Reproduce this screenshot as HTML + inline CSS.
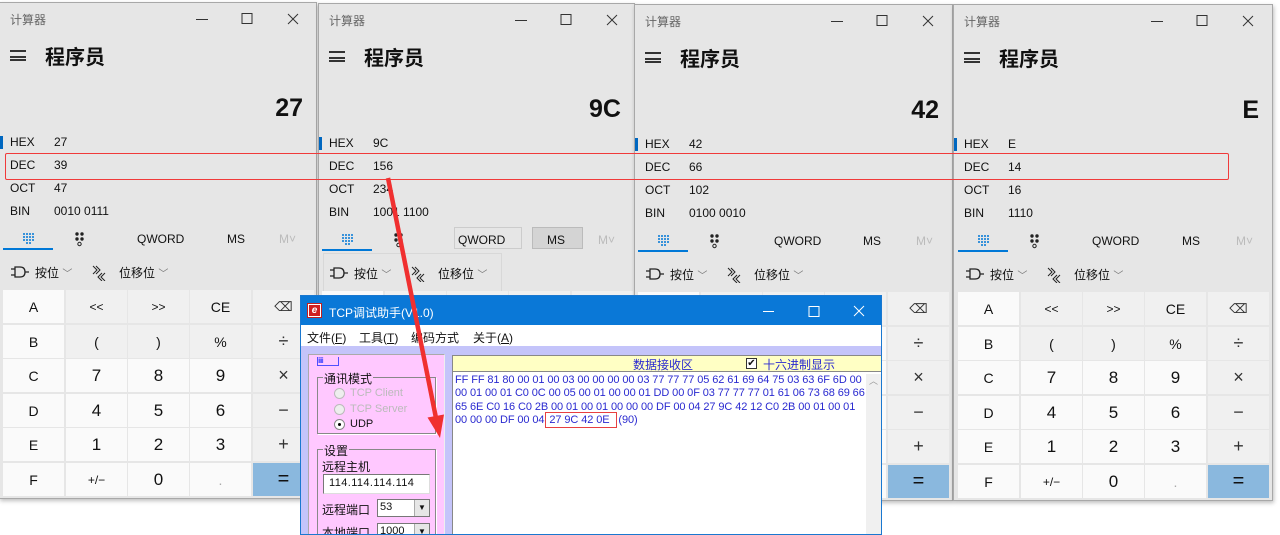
<!DOCTYPE html>
<html><head><meta charset="utf-8">
<style>
*{margin:0;padding:0;box-sizing:border-box}
body{width:1280px;height:533px;overflow:hidden;background:#fff;position:relative;font-family:"Liberation Sans","Noto Sans CJK SC",sans-serif;color:#111}
.w{position:absolute;height:497px;background:#e6e6e6;border:1px solid #a8a8a8;box-shadow:1px 2px 4px rgba(0,0,0,.25);overflow:hidden}
.a{position:absolute;white-space:nowrap}
.ttl{top:8px;left:10px;font-size:12px;color:#666}
.ham{left:10px;top:47px;width:16px;height:11px;border-top:2px solid #333;border-bottom:2px solid #333}
.ham:after{content:"";position:absolute;left:0;top:3.5px;width:16px;height:2px;background:#333}
.mode{left:45px;top:38px;font-size:20px;font-weight:bold;color:#111}
.big{right:13px;top:91px;font-size:25px;font-weight:bold;color:#111}
.lb{font-size:12px;left:10px;color:#111}
.vl{font-size:12px;left:54px;color:#111}
.bar{left:0;width:3px;height:13px;background:#0067c0}
.tab{font-size:12px;top:229px;color:#111}
.ul{left:3px;top:245px;width:50px;height:2px;background:#0078d7}
.bw{font-size:12px;top:261px}
.k{position:absolute;width:61px;height:33px;display:flex;align-items:center;justify-content:center;font-size:14px;background:#f0f0f0;color:#111}
.l{background:#fafafa}
.n{font-size:17px;background:#fafafa}
.eq{background:#8ab8de;font-size:20px}
.op{font-size:18px;color:#333}
.hx{font-size:11px;color:#2a2ad0;line-height:13.3px;white-space:nowrap;letter-spacing:-0.1px}
</style></head><body>

<!-- Window 1 -->
<div class="w" style="left:-1px;top:2px;width:318px">
<div class="a ttl">计算器</div>
<svg class="a" style="left:190px;top:8px" width="120" height="16"><path d="M6 8.5H18M52 2.5H62V12.5H52Z M98 3L108 13M108 3L98 13" stroke="#333" fill="none" stroke-width="1"/></svg>
<div class="a ham"></div><div class="a mode">程序员</div>
<div class="a big">27</div>
<div class="a bar" style="top:133px"></div>
<div class="a lb" style="top:132px">HEX</div><div class="a vl" style="top:132px">27</div>
<div class="a lb" style="top:155px">DEC</div><div class="a vl" style="top:155px">39</div>
<div class="a lb" style="top:178px">OCT</div><div class="a vl" style="top:178px">47</div>
<div class="a lb" style="top:201px">BIN</div><div class="a vl" style="top:201px">0010 0111</div>
<svg class="a" style="left:22px;top:229px" width="70" height="16"><g fill="#0078d7"><circle cx="2" cy="2" r="1"/><circle cx="5" cy="2" r="1"/><circle cx="8" cy="2" r="1"/><circle cx="11" cy="2" r="1"/><circle cx="2" cy="5" r="1"/><circle cx="5" cy="5" r="1"/><circle cx="8" cy="5" r="1"/><circle cx="11" cy="5" r="1"/><circle cx="2" cy="8" r="1"/><circle cx="5" cy="8" r="1"/><circle cx="8" cy="8" r="1"/><circle cx="11" cy="8" r="1"/><circle cx="5" cy="11" r="1"/><circle cx="8" cy="11" r="1"/></g><g fill="#222"><circle cx="55" cy="2" r="1.7"/><circle cx="60" cy="2" r="1.7"/><circle cx="55" cy="7" r="1.7"/><circle cx="60" cy="7" r="1.7"/><circle cx="57.5" cy="12" r="1.7" fill="none" stroke="#222"/></g></svg>
<div class="a tab" style="left:137px">QWORD</div><div class="a tab" style="left:227px">MS</div><div class="a tab" style="left:279px;color:#bbb">M˅</div>
<div class="a ul"></div>
<svg class="a" style="left:10px;top:262px" width="170" height="16"><path d="M1 4H5M1 10H5M5 2H10Q15 2 15 7Q15 12 10 12H5Z M15 7H19" stroke="#222" fill="none" stroke-width="1.3"/><path d="M83 1L87 5L83 9M86 1L90 5L86 9M92 8L88 12L92 16M95 8L91 12L95 16" stroke="#222" fill="none" stroke-width="1"/></svg>
<div class="a bw" style="left:35px">按位 <span style="color:#777;font-size:10px">﹀</span></div>
<div class="a bw" style="left:119px">位移位 <span style="color:#777;font-size:10px">﹀</span></div>
<div class="k l" style="left:3px;top:287px">A</div><div class="k" style="left:66px;top:287px;font-size:12px">&lt;&lt;</div><div class="k" style="left:128px;top:287px;font-size:12px">&gt;&gt;</div><div class="k" style="left:190px;top:287px">CE</div><div class="k op" style="left:253px;top:287px;font-size:13px">⌫</div>
<div class="k l" style="left:3px;top:322px">B</div><div class="k" style="left:66px;top:322px">(</div><div class="k" style="left:128px;top:322px">)</div><div class="k" style="left:190px;top:322px">%</div><div class="k op" style="left:253px;top:322px">÷</div>
<div class="k l" style="left:3px;top:356px">C</div><div class="k n" style="left:66px;top:356px">7</div><div class="k n" style="left:128px;top:356px">8</div><div class="k n" style="left:190px;top:356px">9</div><div class="k op" style="left:253px;top:356px">×</div>
<div class="k l" style="left:3px;top:391px">D</div><div class="k n" style="left:66px;top:391px">4</div><div class="k n" style="left:128px;top:391px">5</div><div class="k n" style="left:190px;top:391px">6</div><div class="k op" style="left:253px;top:391px">−</div>
<div class="k l" style="left:3px;top:425px">E</div><div class="k n" style="left:66px;top:425px">1</div><div class="k n" style="left:128px;top:425px">2</div><div class="k n" style="left:190px;top:425px">3</div><div class="k op" style="left:253px;top:425px">+</div>
<div class="k l" style="left:3px;top:460px">F</div><div class="k l" style="left:66px;top:460px;font-size:12px">+/−</div><div class="k n" style="left:128px;top:460px">0</div><div class="k l" style="left:190px;top:460px;color:#aaa">.</div><div class="k eq" style="left:253px;top:460px">=</div>
</div>

<!-- Window 2 -->
<div class="w" style="left:318px;top:3px;width:317px">
<div class="a ttl">计算器</div>
<svg class="a" style="left:190px;top:8px" width="120" height="16"><path d="M6 8.5H18M52 2.5H62V12.5H52Z M98 3L108 13M108 3L98 13" stroke="#333" fill="none" stroke-width="1"/></svg>
<div class="a ham"></div><div class="a mode">程序员</div>
<div class="a big">9C</div>
<div class="a bar" style="top:133px"></div>
<div class="a lb" style="top:132px">HEX</div><div class="a vl" style="top:132px">9C</div>
<div class="a lb" style="top:155px">DEC</div><div class="a vl" style="top:155px">156</div>
<div class="a lb" style="top:178px">OCT</div><div class="a vl" style="top:178px">234</div>
<div class="a lb" style="top:201px">BIN</div><div class="a vl" style="top:201px">1001 1100</div>
<svg class="a" style="left:22px;top:229px" width="70" height="16"><g fill="#0078d7"><circle cx="2" cy="2" r="1"/><circle cx="5" cy="2" r="1"/><circle cx="8" cy="2" r="1"/><circle cx="11" cy="2" r="1"/><circle cx="2" cy="5" r="1"/><circle cx="5" cy="5" r="1"/><circle cx="8" cy="5" r="1"/><circle cx="11" cy="5" r="1"/><circle cx="2" cy="8" r="1"/><circle cx="5" cy="8" r="1"/><circle cx="8" cy="8" r="1"/><circle cx="11" cy="8" r="1"/><circle cx="5" cy="11" r="1"/><circle cx="8" cy="11" r="1"/></g><g fill="#222"><circle cx="55" cy="2" r="1.7"/><circle cx="60" cy="2" r="1.7"/><circle cx="55" cy="7" r="1.7"/><circle cx="60" cy="7" r="1.7"/><circle cx="57.5" cy="12" r="1.7" fill="none" stroke="#222"/></g></svg>
<div class="a" style="left:135px;top:223px;width:68px;height:22px;border:1px solid #ccc"></div>
<div class="a" style="left:213px;top:223px;width:51px;height:22px;border:1px solid #bbb;background:#d4d4d4"></div>
<div class="a tab" style="left:139px">QWORD</div><div class="a tab" style="left:228px">MS</div><div class="a tab" style="left:279px;color:#bbb">M˅</div>
<div class="a ul"></div>
<div class="a" style="left:4px;top:249px;width:179px;height:40px;border:1px solid #d8d8d8;border-bottom:none"></div>
<svg class="a" style="left:10px;top:262px" width="170" height="16"><path d="M1 4H5M1 10H5M5 2H10Q15 2 15 7Q15 12 10 12H5Z M15 7H19" stroke="#222" fill="none" stroke-width="1.3"/><path d="M83 1L87 5L83 9M86 1L90 5L86 9M92 8L88 12L92 16M95 8L91 12L95 16" stroke="#222" fill="none" stroke-width="1"/></svg>
<div class="a bw" style="left:35px">按位 <span style="color:#777;font-size:10px">﹀</span></div>
<div class="a bw" style="left:119px">位移位 <span style="color:#777;font-size:10px">﹀</span></div>
<div class="k l" style="left:3px;top:287px"></div><div class="k" style="left:66px;top:287px"></div><div class="k" style="left:128px;top:287px"></div><div class="k" style="left:190px;top:287px"></div><div class="k" style="left:253px;top:287px"></div>
</div>

<!-- Window 3 -->
<div class="w" style="left:634px;top:4px;width:319px">
<div class="a ttl">计算器</div>
<svg class="a" style="left:190px;top:8px" width="120" height="16"><path d="M6 8.5H18M52 2.5H62V12.5H52Z M98 3L108 13M108 3L98 13" stroke="#333" fill="none" stroke-width="1"/></svg>
<div class="a ham"></div><div class="a mode">程序员</div>
<div class="a big">42</div>
<div class="a bar" style="top:133px"></div>
<div class="a lb" style="top:132px">HEX</div><div class="a vl" style="top:132px">42</div>
<div class="a lb" style="top:155px">DEC</div><div class="a vl" style="top:155px">66</div>
<div class="a lb" style="top:178px">OCT</div><div class="a vl" style="top:178px">102</div>
<div class="a lb" style="top:201px">BIN</div><div class="a vl" style="top:201px">0100 0010</div>
<svg class="a" style="left:22px;top:229px" width="70" height="16"><g fill="#0078d7"><circle cx="2" cy="2" r="1"/><circle cx="5" cy="2" r="1"/><circle cx="8" cy="2" r="1"/><circle cx="11" cy="2" r="1"/><circle cx="2" cy="5" r="1"/><circle cx="5" cy="5" r="1"/><circle cx="8" cy="5" r="1"/><circle cx="11" cy="5" r="1"/><circle cx="2" cy="8" r="1"/><circle cx="5" cy="8" r="1"/><circle cx="8" cy="8" r="1"/><circle cx="11" cy="8" r="1"/><circle cx="5" cy="11" r="1"/><circle cx="8" cy="11" r="1"/></g><g fill="#222"><circle cx="55" cy="2" r="1.7"/><circle cx="60" cy="2" r="1.7"/><circle cx="55" cy="7" r="1.7"/><circle cx="60" cy="7" r="1.7"/><circle cx="57.5" cy="12" r="1.7" fill="none" stroke="#222"/></g></svg>
<div class="a tab" style="left:139px">QWORD</div><div class="a tab" style="left:228px">MS</div><div class="a tab" style="left:281px;color:#bbb">M˅</div>
<div class="a ul"></div>
<svg class="a" style="left:10px;top:262px" width="170" height="16"><path d="M1 4H5M1 10H5M5 2H10Q15 2 15 7Q15 12 10 12H5Z M15 7H19" stroke="#222" fill="none" stroke-width="1.3"/><path d="M83 1L87 5L83 9M86 1L90 5L86 9M92 8L88 12L92 16M95 8L91 12L95 16" stroke="#222" fill="none" stroke-width="1"/></svg>
<div class="a bw" style="left:35px">按位 <span style="color:#777;font-size:10px">﹀</span></div>
<div class="a bw" style="left:119px">位移位 <span style="color:#777;font-size:10px">﹀</span></div>
<div class="k l" style="left:3px;top:287px"></div><div class="k" style="left:66px;top:287px"></div><div class="k" style="left:128px;top:287px"></div><div class="k" style="left:190px;top:287px"></div>
<div class="k l" style="left:190px;top:322px"></div><div class="k n" style="left:190px;top:356px"></div><div class="k n" style="left:190px;top:391px"></div><div class="k n" style="left:190px;top:425px"></div><div class="k l" style="left:190px;top:460px"></div>
<div class="k op" style="left:253px;top:287px;font-size:13px">⌫</div><div class="k op" style="left:253px;top:322px">÷</div><div class="k op" style="left:253px;top:356px">×</div><div class="k op" style="left:253px;top:391px">−</div><div class="k op" style="left:253px;top:425px">+</div><div class="k eq" style="left:253px;top:460px">=</div>
</div>

<!-- Window 4 -->
<div class="w" style="left:953px;top:4px;width:320px">
<div class="a ttl">计算器</div>
<svg class="a" style="left:191px;top:8px" width="120" height="16"><path d="M6 8.5H18M52 2.5H62V12.5H52Z M98 3L108 13M108 3L98 13" stroke="#333" fill="none" stroke-width="1"/></svg>
<div class="a ham"></div><div class="a mode">程序员</div>
<div class="a big">E</div>
<div class="a bar" style="top:133px"></div>
<div class="a lb" style="top:132px">HEX</div><div class="a vl" style="top:132px">E</div>
<div class="a lb" style="top:155px">DEC</div><div class="a vl" style="top:155px">14</div>
<div class="a lb" style="top:178px">OCT</div><div class="a vl" style="top:178px">16</div>
<div class="a lb" style="top:201px">BIN</div><div class="a vl" style="top:201px">1110</div>
<svg class="a" style="left:23px;top:229px" width="70" height="16"><g fill="#0078d7"><circle cx="2" cy="2" r="1"/><circle cx="5" cy="2" r="1"/><circle cx="8" cy="2" r="1"/><circle cx="11" cy="2" r="1"/><circle cx="2" cy="5" r="1"/><circle cx="5" cy="5" r="1"/><circle cx="8" cy="5" r="1"/><circle cx="11" cy="5" r="1"/><circle cx="2" cy="8" r="1"/><circle cx="5" cy="8" r="1"/><circle cx="8" cy="8" r="1"/><circle cx="11" cy="8" r="1"/><circle cx="5" cy="11" r="1"/><circle cx="8" cy="11" r="1"/></g><g fill="#222"><circle cx="55" cy="2" r="1.7"/><circle cx="60" cy="2" r="1.7"/><circle cx="55" cy="7" r="1.7"/><circle cx="60" cy="7" r="1.7"/><circle cx="57.5" cy="12" r="1.7" fill="none" stroke="#222"/></g></svg>
<div class="a tab" style="left:138px">QWORD</div><div class="a tab" style="left:228px">MS</div><div class="a tab" style="left:282px;color:#bbb">M˅</div>
<div class="a ul" style="left:4px"></div>
<svg class="a" style="left:11px;top:262px" width="170" height="16"><path d="M1 4H5M1 10H5M5 2H10Q15 2 15 7Q15 12 10 12H5Z M15 7H19" stroke="#222" fill="none" stroke-width="1.3"/><path d="M83 1L87 5L83 9M86 1L90 5L86 9M92 8L88 12L92 16M95 8L91 12L95 16" stroke="#222" fill="none" stroke-width="1"/></svg>
<div class="a bw" style="left:36px">按位 <span style="color:#777;font-size:10px">﹀</span></div>
<div class="a bw" style="left:120px">位移位 <span style="color:#777;font-size:10px">﹀</span></div>
<div class="k l" style="left:4px;top:287px">A</div><div class="k" style="left:67px;top:287px;font-size:12px">&lt;&lt;</div><div class="k" style="left:129px;top:287px;font-size:12px">&gt;&gt;</div><div class="k" style="left:191px;top:287px">CE</div><div class="k op" style="left:254px;top:287px;font-size:13px">⌫</div>
<div class="k l" style="left:4px;top:322px">B</div><div class="k" style="left:67px;top:322px">(</div><div class="k" style="left:129px;top:322px">)</div><div class="k" style="left:191px;top:322px">%</div><div class="k op" style="left:254px;top:322px">÷</div>
<div class="k l" style="left:4px;top:356px">C</div><div class="k n" style="left:67px;top:356px">7</div><div class="k n" style="left:129px;top:356px">8</div><div class="k n" style="left:191px;top:356px">9</div><div class="k op" style="left:254px;top:356px">×</div>
<div class="k l" style="left:4px;top:391px">D</div><div class="k n" style="left:67px;top:391px">4</div><div class="k n" style="left:129px;top:391px">5</div><div class="k n" style="left:191px;top:391px">6</div><div class="k op" style="left:254px;top:391px">−</div>
<div class="k l" style="left:4px;top:425px">E</div><div class="k n" style="left:67px;top:425px">1</div><div class="k n" style="left:129px;top:425px">2</div><div class="k n" style="left:191px;top:425px">3</div><div class="k op" style="left:254px;top:425px">+</div>
<div class="k l" style="left:4px;top:460px">F</div><div class="k l" style="left:67px;top:460px;font-size:12px">+/−</div><div class="k n" style="left:129px;top:460px">0</div><div class="k l" style="left:191px;top:460px;color:#aaa">.</div><div class="k eq" style="left:254px;top:460px">=</div>
</div>

<!-- red DEC rect -->
<div class="a" style="left:5px;top:153px;width:1224px;height:27px;border:1px solid #f03a3a;border-radius:2px;z-index:5"></div>

<!-- TCP window -->
<div class="a" style="left:300px;top:295px;width:582px;height:240px;background:#c4c4fa;border:1px solid #1a78d0;overflow:hidden;z-index:6">
 <div class="a" style="left:0;top:0;width:582px;height:29px;background:#0a78d7"></div>
 <div class="a" style="left:6px;top:7px;width:15px;height:15px;background:#fff;border:1px solid #c02020"><div style="position:absolute;left:1px;top:1px;width:11px;height:11px;background:#d02020;color:#fff;font:bold italic 10px/11px 'Liberation Sans';text-align:center">e</div></div>
 <div class="a" style="left:28px;top:8px;font-size:12px;color:#fff">TCP调试助手(V1.0)</div>
 <svg class="a" style="left:455px;top:6px" width="120" height="18"><path d="M7 9.5H18M53 4.5H63V14.5H53Z M98 4L108 14M108 4L98 14" stroke="#fff" fill="none" stroke-width="1"/></svg>
 <div class="a" style="left:0;top:29px;width:582px;height:21px;background:#fff"></div>
 <div class="a" style="left:6px;top:33px;font-size:12px">文件(<u>F</u>)</div>
 <div class="a" style="left:58px;top:33px;font-size:12px">工具(<u>T</u>)</div>
 <div class="a" style="left:110px;top:33px;font-size:12px">编码方式</div>
 <div class="a" style="left:172px;top:33px;font-size:12px">关于(<u>A</u>)</div>
 <div class="a" style="left:7px;top:58px;width:137px;height:190px;background:#ffc8ff;border:1px solid #aaa;border-right-color:#eee;border-bottom:none"></div>
 <div class="a" style="left:16px;top:61px;width:22px;height:9px;border-bottom:1px solid #5050ff;border-left:1px solid #5050ff;border-right:1px solid #5050ff;font-size:8px;line-height:8px;color:#5050ff;letter-spacing:-1px">iiiiii</div>
 <div class="a" style="left:16px;top:81px;width:119px;height:57px;border:1px solid #888;box-shadow:1px 1px 0 #fff"></div>
 <div class="a" style="left:22px;top:74px;font-size:12px;background:#ffc8ff;padding:0 1px">通讯模式</div>
 <div class="a" style="left:33px;top:92px;width:11px;height:11px;border-radius:50%;background:#eee;border:1px solid #bbb"></div>
 <div class="a" style="left:49px;top:91px;font-size:11px;color:#bbb">TCP Client</div>
 <div class="a" style="left:33px;top:108px;width:11px;height:11px;border-radius:50%;background:#eee;border:1px solid #bbb"></div>
 <div class="a" style="left:49px;top:107px;font-size:11px;color:#bbb">TCP Server</div>
 <div class="a" style="left:33px;top:123px;width:11px;height:11px;border-radius:50%;background:#fff;border:1px solid #888"><div style="position:absolute;left:3px;top:3px;width:3px;height:3px;border-radius:50%;background:#000"></div></div>
 <div class="a" style="left:49px;top:122px;font-size:11px">UDP</div>
 <div class="a" style="left:16px;top:153px;width:119px;height:100px;border:1px solid #888;box-shadow:1px 1px 0 #fff"></div>
 <div class="a" style="left:22px;top:146px;font-size:12px;background:#ffc8ff;padding:0 1px">设置</div>
 <div class="a" style="left:21px;top:162px;font-size:12px">远程主机</div>
 <div class="a" style="left:22px;top:178px;width:107px;height:20px;background:#fff;border:1px solid #777;border-right-color:#ddd;border-bottom-color:#ddd;font-size:11px;padding:2px 0 0 5px;letter-spacing:0.4px">114.114.114.114</div>
 <div class="a" style="left:21px;top:205px;font-size:12px">远程端口</div>
 <div class="a" style="left:76px;top:203px;width:53px;height:18px;background:#fff;border:1px solid #777;font-size:11px;padding:1px 0 0 2px">53<div style="position:absolute;right:0;top:0;width:15px;height:16px;background:#e6e6e6;border-left:1px solid #aaa;font-size:8px;text-align:center;line-height:16px">▼</div></div>
 <div class="a" style="left:21px;top:228px;font-size:12px">本地端口</div>
 <div class="a" style="left:76px;top:227px;width:53px;height:18px;background:#fff;border:1px solid #777;font-size:11px;padding:1px 0 0 2px">1000<div style="position:absolute;right:0;top:0;width:15px;height:16px;background:#e6e6e6;border-left:1px solid #aaa;font-size:8px;text-align:center;line-height:16px">▼</div></div>
 <div class="a" style="left:151px;top:59px;width:431px;height:17px;background:#ffffc4;border:1px solid #888;border-right:none"></div>
 <div class="a" style="left:332px;top:60px;font-size:12px;color:#2a2ad0">数据接收区</div>
 <div class="a" style="left:445px;top:62px;width:11px;height:11px;background:#fff;border:1px solid #333;font-size:10px;line-height:9px;text-align:center">✔</div>
 <div class="a" style="left:462px;top:60px;font-size:12px;color:#2a2ad0">十六进制显示</div>
 <div class="a" style="left:151px;top:76px;width:431px;height:170px;background:#fff;border-left:1px solid #888"></div>
 <div class="a" style="left:565px;top:78px;width:15px;height:170px;background:#f0f0f0"></div>
 <div class="a" style="left:568px;top:78px;font-size:9px;color:#999">︿</div>
 <div class="a hx" style="left:154px;top:78px">FF FF 81 80 00 01 00 03 00 00 00 00 03 77 77 77 05 62 61 69 64 75 03 63 6F 6D 00<br>00 01 00 01 C0 0C 00 05 00 01 00 00 01 DD 00 0F 03 77 77 77 01 61 06 73 68 69 66<br>65 6E C0 16 C0 2B 00 01 00 01 00 00 00 DF 00 04 27 9C 42 12 C0 2B 00 01 00 01<br>00 00 00 DF 00 04 <span style="outline:1px solid #e84040;outline-offset:1px;padding:0 6px 0 2px">27 9C 42 0E</span> (90)</div>
</div>

<svg class="a" style="left:0;top:0;z-index:7" width="1280" height="533"><path d="M388 178L436 418" stroke="#f03030" stroke-width="4.5" fill="none"/><path d="M440 438L444 414.5L427.5 417.5Z" fill="#f03030"/></svg>
</body></html>
